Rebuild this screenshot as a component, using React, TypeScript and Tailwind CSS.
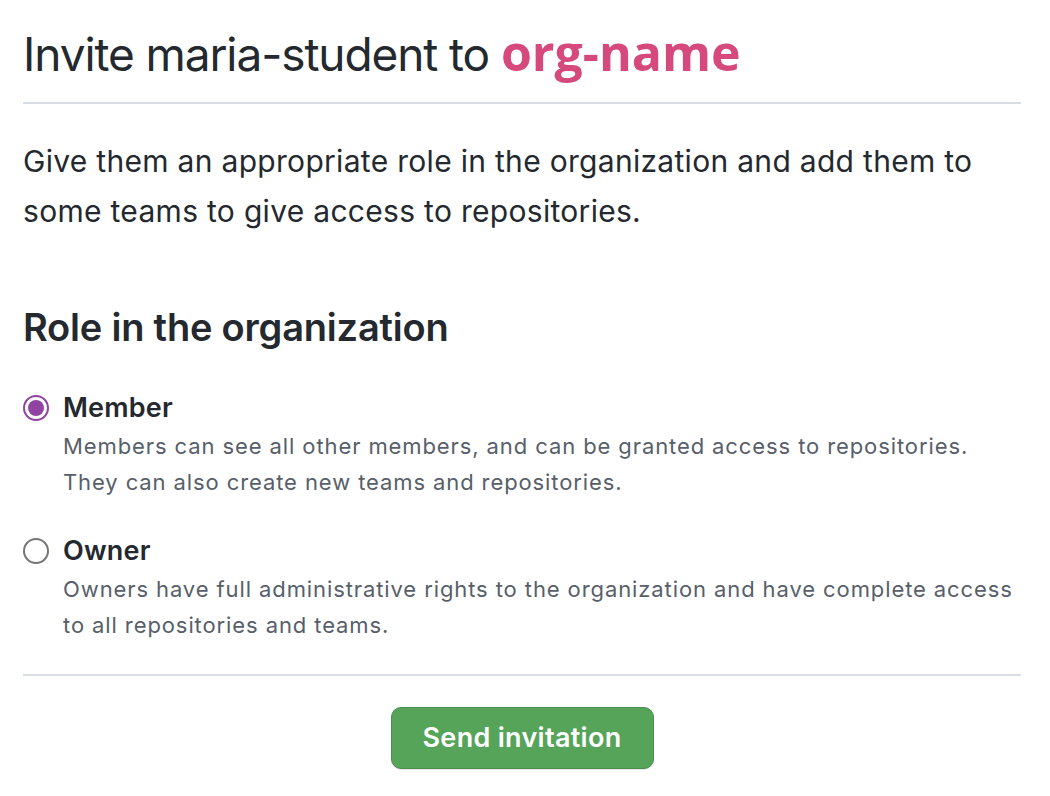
export default function App() {
  return (
    <div className="min-h-[796px] bg-white text-[#24292f] font-['Inter',sans-serif]">
      <div className="w-[998px] ml-[23px] pt-[22px]">
        <h1 className="text-[46px] font-normal leading-[60px] tracking-[-1.1px] pb-[18px] border-b-2 border-[#d8dee4]">
          Invite maria-student to{' '}
          <span className="font-['Open_Sans',sans-serif] text-[50px] font-bold text-[#d6497c] tracking-normal">org-name</span>
        </h1>

        <p className="mt-[32px] text-[30px] leading-[50px] tracking-[0.3px]">
          Give them an appropriate role in the organization and add them to some teams to give access to repositories.
        </p>

        <h2 className="mt-[67px] text-[38px] font-semibold leading-[48px] tracking-[-0.2px]">Role in the organization</h2>

        <div className="mt-[37px] flex flex-col gap-[31px]">
          <RoleOption
            checked
            title="Member"
            text="Members can see all other members, and can be granted access to repositories. They can also create new teams and repositories."
          />
          <RoleOption
            title="Owner"
            text="Owners have full administrative rights to the organization and have complete access to all repositories and teams."
          />
        </div>

        <div className="mt-[31px] border-t-2 border-[#d8dee4] pt-[31px] flex justify-center">
          <button className="w-[263px] h-[62px] rounded-[10px] bg-[#55a459] border border-[#4b8f4f] text-white text-[27px] font-semibold tracking-[0.3px] shadow-[0_1px_0_rgba(27,31,36,0.1)]">
            Send invitation
          </button>
        </div>
      </div>
    </div>
  )
}

type RoleOptionProps = {
  title: string
  text: string
  checked?: boolean
}

function RoleOption({ title, text, checked = false }: RoleOptionProps) {
  return (
    <div className="flex gap-[14px]">
      <div className="pt-[7px]">
        {checked ? (
          <div className="w-[26px] h-[26px] rounded-full border-2 border-[#8e44a0] flex items-center justify-center">
            <div className="w-[16px] h-[16px] rounded-full bg-[#8e44a0]" />
          </div>
        ) : (
          <div className="w-[26px] h-[26px] rounded-full border-2 border-[#767676]" />
        )}
      </div>
      <div>
        <div className="text-[27px] font-semibold leading-[40px] tracking-[0.2px]">{title}</div>
        <p className="text-[22px] leading-[36px] tracking-[0.9px] text-[#57606a] max-w-[960px]">{text}</p>
      </div>
    </div>
  )
}
